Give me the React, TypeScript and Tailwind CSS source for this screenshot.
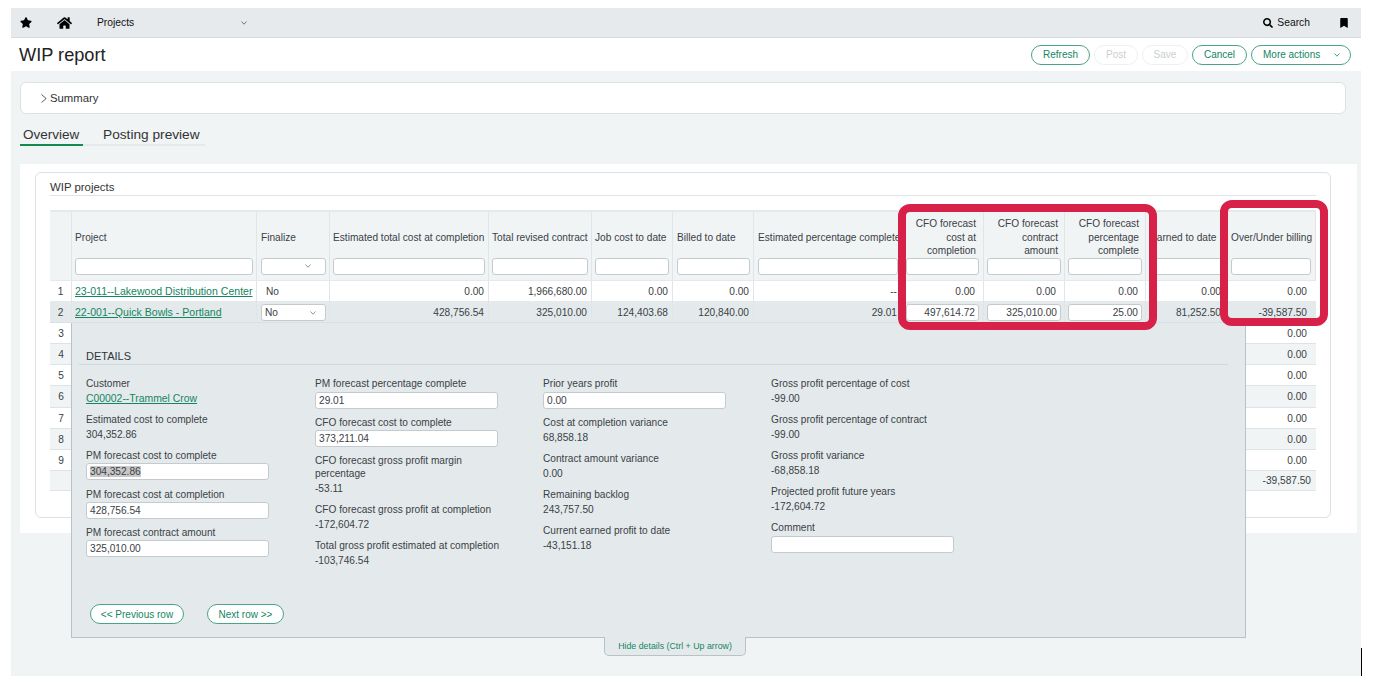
import { FaBookmark, FaHome, FaSearch, FaStar } from 'react-icons/fa';

// shared column template for every row of the WIP grid
const cols = 'grid grid-cols-[22px_185px_73px_159px_103px_81px_81px_150px_80px_81px_81px_82px_88px]';
const cellLine = 'border-r border-[#dfe5e8]';
const linkText = 'text-[10.55px] text-[#14855f] underline';

const headers = [
  { label: 'Project', pad: 'pl-[3px] pr-[3px]' },
  { label: 'Finalize', pad: 'pl-[4px] pr-[3px]', select: true },
  { label: 'Estimated total cost at completion', pad: 'pl-[3px] pr-[3px]' },
  { label: 'Total revised contract', pad: 'pl-[3px] pr-[3px]' },
  { label: 'Job cost to date', pad: 'pl-[3px] pr-[3px]' },
  { label: 'Billed to date', pad: 'pl-[4px] pr-[3px]' },
  { label: 'Estimated percentage complete', pad: 'pl-[4px] pr-[5px]' },
  { label: 'CFO forecast cost at completion', pad: 'pl-[2px] pr-[4px]', right: true },
  { label: 'CFO forecast contract amount', pad: 'pl-[3px] pr-[3px]', right: true },
  { label: 'CFO forecast percentage complete', pad: 'pl-[3px] pr-[3px]', right: true },
  { label: 'Earned to date', pad: 'pl-[4px] pr-[3px]' },
  { label: 'Over/Under billing', pad: 'pl-[3px] pr-[4px]' },
];

const valuePad = ['pr-[4px]', 'pr-[4px]', 'pr-[4px]', 'pr-[4px]', 'pr-[6px]', 'pr-[8px]', 'pr-[8px]', 'pr-[7px]', 'pr-[6px]', 'pr-[9px]'];
const boxPad: Record<number, string> = { 5: 'pl-[2px] pr-[4px]', 6: 'pl-[3px] pr-[3px]', 7: 'pl-[3px] pr-[3px]' };
const row1 = ['0.00', '1,966,680.00', '0.00', '0.00', '--', '0.00', '0.00', '0.00', '0.00', '0.00'];
const row2 = ['428,756.54', '325,010.00', '124,403.68', '120,840.00', '29.01', '497,614.72', '325,010.00', '25.00', '81,252.50', '-39,587.50'];

function ChevronDown({ className = '' }: { className?: string }) {
  return (
    <svg viewBox="0 0 6 4" fill="none" stroke="currentColor" strokeWidth="0.8" className={`h-[4px] w-[6px] ${className}`}>
      <path d="M0.5 0.5 L3 3.2 L5.5 0.5" />
    </svg>
  );
}

function Pill({ children, disabled, className = '' }: { children: React.ReactNode; disabled?: boolean; className?: string }) {
  return (
    <button
      className={`h-[20px] rounded-full border bg-white text-[10px] ${
        disabled ? 'border-[#eef1f2] text-[#c9cfd2]' : 'border-[#4ba483] text-[#14855f]'
      } ${className}`}
    >
      {children}
    </button>
  );
}

function Box({ value = '', right = false, className = '' }: { value?: string; right?: boolean; className?: string }) {
  return (
    <div
      className={`h-[17px] rounded-[3px] border border-[#c3cbcf] bg-white px-[3px] text-[10.15px] leading-[15px] text-[#3a4145] ${
        right ? 'text-right' : ''
      } ${className}`}
    >
      {value}
    </div>
  );
}

function Field({ label, value }: { label: string; value: string }) {
  return (
    <div className="mb-[7px]">
      <div className="text-[10.15px] leading-[13px] text-[#3a4145]">{label}</div>
      <div className="mt-[2px] h-[14px] text-[10.15px] leading-[14px] text-[#3a4145]">{value}</div>
    </div>
  );
}

function InputField({
  label,
  value = '',
  className = 'mb-[7px]',
  boxClass = 'mt-[2px]',
}: {
  label: string;
  value?: string;
  className?: string;
  boxClass?: string;
}) {
  return (
    <div className={className}>
      <div className="text-[10.15px] leading-[13px] text-[#3a4145]">{label}</div>
      <Box value={value} className={`w-[183px] ${boxClass}`} />
    </div>
  );
}

function Details() {
  return (
    <div className="absolute left-[71px] top-[323px] flex h-[315px] w-[1175px] flex-col border-x border-b border-[#b9c2c6] bg-[#e4eaec]">
      <div className="ml-[7px] mr-[17px] mt-[26px] border-b border-[#cfd7da] pb-[1px] pl-[7px] text-[11px] leading-[14px] text-[#2f3538]">
        DETAILS
      </div>
      <div className="mt-[12px] flex pl-[14px]">
        <div className="w-[229px]">
          <div className="mb-[7px]">
            <div className="text-[10.15px] leading-[13px] text-[#3a4145]">Customer</div>
            <a className="mt-[2px] block h-[14px] text-[10.4px] leading-[14px] text-[#14855f] underline">C00002--Trammel Crow</a>
          </div>
          <Field label="Estimated cost to complete" value="304,352.86" />
          <div className="mb-[8px]">
            <div className="text-[10.15px] leading-[13px] text-[#3a4145]">PM forecast cost to complete</div>
            <div className="mt-[1px] h-[17px] w-[183px] rounded-[3px] border border-[#c3cbcf] bg-white px-[3px] text-[10.15px] leading-[15px] text-[#3a4145]">
              <span className="bg-[#c8c8c8]">304,352.86</span>
            </div>
          </div>
          <InputField label="PM forecast cost at completion" value="428,756.54" boxClass="mt-[1px]" />
          <InputField label="PM forecast contract amount" value="325,010.00" boxClass="mt-[1px]" />
        </div>
        <div className="w-[228px]">
          <InputField label="PM forecast percentage complete" value="29.01" />
          <InputField label="CFO forecast cost to complete" value="373,211.04" boxClass="mt-[1px]" />
          <div className="w-[183px]">
            <Field label="CFO forecast gross profit margin percentage" value="-53.11" />
          </div>
          <Field label="CFO forecast gross profit at completion" value="-172,604.72" />
          <Field label="Total gross profit estimated at completion" value="-103,746.54" />
        </div>
        <div className="w-[228px]">
          <InputField label="Prior years profit" value="0.00" />
          <Field label="Cost at completion variance" value="68,858.18" />
          <Field label="Contract amount variance" value="0.00" />
          <Field label="Remaining backlog" value="243,757.50" />
          <Field label="Current earned profit to date" value="-43,151.18" />
        </div>
        <div className="w-[228px]">
          <Field label="Gross profit percentage of cost" value="-99.00" />
          <Field label="Gross profit percentage of contract" value="-99.00" />
          <Field label="Gross profit variance" value="-68,858.18" />
          <Field label="Projected profit future years" value="-172,604.72" />
          <InputField label="Comment" className="mt-[1px]" />
        </div>
      </div>
      <div className="mt-auto mb-[13px] flex gap-[23px] pl-[18px]">
        <Pill className="w-[94px]">&lt;&lt; Previous row</Pill>
        <Pill className="w-[77px]">Next row &gt;&gt;</Pill>
      </div>
    </div>
  );
}

function Grid() {
  const blanks = [3, 4, 5, 6, 7, 8, 9];
  return (
    <div className="mt-[14px] w-[1266px] text-[10.15px] text-[#3a4145]">
      <div className={`${cols} h-[71px] border-t-[2px] border-b border-[#e4e9eb] bg-[#f1f4f5]`}>
        <div className={cellLine} />
        {headers.map((h) => (
          <div key={h.label} className={`${cellLine} flex flex-col ${h.pad}`}>
            <div
              className={`flex h-[46px] items-center pt-[5px] leading-[13.5px] ${
                h.right ? 'justify-end pr-[3px] text-right' : 'whitespace-nowrap'
              }`}
            >
              <span className={h.right ? 'w-[66px]' : ''}>{h.label}</span>
            </div>
            <div className="relative">
              <Box />
              {h.select && <ChevronDown className="absolute right-[15px] top-[6px] text-[#777]" />}
            </div>
          </div>
        ))}
      </div>

      <div className={`${cols} h-[21px] border-b border-[#e4e9eb] bg-white leading-[21px]`}>
        <div className={`${cellLine} text-center`}>1</div>
        <div className={`${cellLine} overflow-hidden whitespace-nowrap pl-[3px] ${linkText}`}>23-011--Lakewood Distribution Center</div>
        <div className={`${cellLine} pl-[9px]`}>No</div>
        {row1.map((v, i) => (
          <div key={i} className={`${i < 9 ? cellLine : ''} ${valuePad[i]} text-right`}>{v}</div>
        ))}
      </div>

      <div className={`${cols} h-[21px] border-b border-[#d9e0e3] bg-[#e4eaec] leading-[21px]`}>
        <div className={`${cellLine} text-center`}>2</div>
        <div className={`${cellLine} overflow-hidden whitespace-nowrap pl-[3px] ${linkText}`}>22-001--Quick Bowls - Portland</div>
        <div className={`${cellLine} relative pl-[4px] pr-[3px] pt-[2px]`}>
          <Box value="No" />
          <ChevronDown className="absolute right-[13px] top-[9px] text-[#777]" />
        </div>
        {row2.map((v, i) =>
          boxPad[i] ? (
            <div key={i} className={`${cellLine} ${boxPad[i]} pt-[2px]`}>
              <Box value={v} right />
            </div>
          ) : (
            <div key={i} className={`${i < 9 ? cellLine : ''} ${valuePad[i]} text-right`}>{v}</div>
          ),
        )}
      </div>

      {blanks.map((n) => (
        <div
          key={n}
          className={`${cols} h-[21.15px] border-b border-[#dde3e6] leading-[22px] ${n % 2 === 0 ? 'bg-[#f1f4f5]' : 'bg-white'}`}
        >
          <div className="text-center">{n}</div>
          <div className="col-span-11" />
          <div className="pr-[9px] text-right">0.00</div>
        </div>
      ))}

      <div className={`${cols} h-[20px] border-b border-[#dde3e6] bg-[#f1f4f5] leading-[19px]`}>
        <div className="col-span-12" />
        <div className="pr-[5px] text-right">-39,587.50</div>
      </div>
    </div>
  );
}

export default function App() {
  return (
    <div className="relative h-[686px] w-[1373px] overflow-hidden bg-white font-['Liberation_Sans',Arial,sans-serif]">
      <div className="ml-[11px] w-[1350px] pt-[8px]">
        {/* top nav */}
        <div className="flex h-[30px] items-center border-b border-[#d5dbde] bg-[#e6eaec] text-[10.3px] text-[#111]">
          <FaStar className="ml-[9px] h-[11px] w-[12px] text-black" />
          <FaHome className="ml-[25px] h-[14px] w-[15px] text-black" />
          <span className="ml-[25px] w-[38px]">Projects</span>
          <ChevronDown className="ml-[106px] text-[#555]" />
          <div className="ml-auto flex items-center">
            <FaSearch className="h-[10px] w-[10px] text-black" />
            <span className="ml-[4px]">Search</span>
            <FaBookmark className="ml-[30px] mr-[13px] h-[10px] w-[8px] text-black" />
          </div>
        </div>

        {/* title row */}
        <div className="flex h-[33px] items-center justify-between bg-white pl-[8px] pr-[10px]">
          <h1 className="text-[18.2px] leading-[22px] text-[#222]">WIP report</h1>
          <div className="flex gap-[4px]">
            <Pill className="w-[59px]">Refresh</Pill>
            <Pill disabled className="w-[44px]">Post</Pill>
            <Pill disabled className="w-[46px]">Save</Pill>
            <Pill className="w-[55px]">Cancel</Pill>
            <Pill className="flex w-[100px] items-center pl-[11px]">
              More actions
              <ChevronDown className="ml-[14px]" />
            </Pill>
          </div>
        </div>

        <div className="h-[605px] bg-[#f1f4f5] pl-[9px] pt-[11px]">
          {/* summary */}
          <div className="flex h-[32px] w-[1326px] items-center rounded-[6px] border border-[#dbe1e4] bg-white pl-[20px] text-[11.3px] text-[#333]">
            <svg viewBox="0 0 6 9" fill="none" stroke="currentColor" strokeWidth="0.8" className="mr-[3px] h-[9px] w-[6px]">
              <path d="M0.5 0.5 L5.2 4.5 L0.5 8.5" />
            </svg>
            Summary
          </div>

          {/* tabs */}
          <div className="mt-[11px] flex h-[21px] w-[185px] border-b-2 border-[#e4e9eb] text-[13.5px] leading-[18px] text-[#333]">
            <div className="-mb-[2px] h-[21px] w-[63px] border-b-2 border-[#148a4e] pl-[3px] pt-[1px]">Overview</div>
            <div className="pl-[20px] pt-[1px] text-[13.7px]">Posting preview</div>
          </div>

          {/* white section */}
          <div className="mt-[18px] h-[369px] w-[1337px] bg-white pl-[15px] pt-[8px]">
            <div className="h-[346px] w-[1296px] rounded-[6px] border border-[#dbe1e4] bg-white pl-[14px] pt-[7px]">
              <div className="mr-[14px] border-b border-[#dde3e6] pb-[1px] text-[11.4px] leading-[14px] text-[#333]">WIP projects</div>
              <Grid />
            </div>
          </div>
        </div>
      </div>

      <Details />

      {/* hide details tab */}
      <div className="absolute left-[604px] top-[637px] flex h-[19px] w-[142px] items-center justify-center rounded-b-[5px] border border-t-0 border-[#b9c2c6] bg-[#e4eaec] pt-[1px] text-[8.8px] text-[#14855f]">
        Hide details (Ctrl + Up arrow)
      </div>

      {/* callout frames drawn on top of the screenshot */}
      <div className="absolute left-[898px] top-[204px] h-[126px] w-[259px] rounded-[12px] border-[8px] border-[#d82148]" />
      <div className="absolute left-[1220px] top-[200px] h-[126px] w-[108px] rounded-[12px] border-[8px] border-[#d82148]" />

      <div className="absolute left-[1361px] top-[648px] h-[28px] w-px bg-black" />
    </div>
  );
}
